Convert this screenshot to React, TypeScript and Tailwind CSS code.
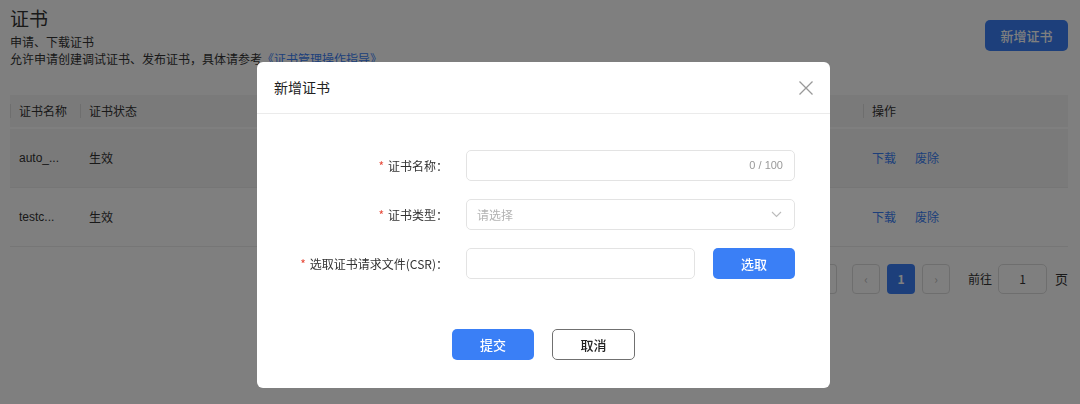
import { useState } from 'react';

const font = { fontFamily: '"Noto Sans CJK SC", "Noto Sans", sans-serif' };

const rows = [
  { name: 'auto_...', status: '生效', hover: true },
  { name: 'testc...', status: '生效', hover: false },
];

const CertPage = () => (
  <div className="w-[1080px] h-[404px] bg-white text-[#333] overflow-hidden" style={font}>
    <div className="flex justify-between pl-[10px] pr-[12px] pt-[4px]">
      <div>
        <div className="text-[19px] leading-[28px]">证书</div>
        <div className="text-[12px] leading-[17px] mt-[1px]">申请、下载证书</div>
        <div className="text-[12px] leading-[17px]">
          允许申请创建调试证书、发布证书，具体请参考<span className="text-[#3a7ff6]">《证书管理操作指导》</span>
        </div>
      </div>
      <button className="mt-[16px] h-[31px] w-[83px] rounded-[5px] bg-[#3a7ff6] text-white text-[13px] font-medium">
        新增证书
      </button>
    </div>

    <div className="ml-[10px] mr-[12px] mt-[28px]">
      <div className="flex h-[32px] items-center bg-[#f5f5f5] text-[12px]">
        <div className="w-[70px] flex items-center">
          <span className="w-px h-[14px] bg-[#ddd] mr-[8px]" />
          证书名称
        </div>
        <div className="flex-1 flex items-center">
          <span className="w-px h-[14px] bg-[#ddd] mr-[8px]" />
          证书状态
        </div>
        <div className="w-[205px] flex items-center">
          <span className="w-px h-[14px] bg-[#ddd] mr-[8px]" />
          操作
        </div>
      </div>
      <div className="mt-[2px]">
        {rows.map((r) => (
          <div
            key={r.name}
            className={`flex h-[59px] items-center text-[12px] border-b border-[#ececec] ${r.hover ? 'bg-[#f5f5f5]' : ''}`}
          >
            <div className="w-[70px] pl-[9px]" style={{ fontFamily: '"Liberation Sans", "Noto Sans CJK SC", sans-serif' }}>
              {r.name}
            </div>
            <div className="flex-1 pl-[9px]">{r.status}</div>
            <div className="w-[205px] pl-[9px] flex gap-[19px] text-[#3a7ff6]">
              <span>下载</span>
              <span>废除</span>
            </div>
          </div>
        ))}
      </div>
      <div className="flex items-center justify-end mt-[17px] text-[12px]">
        <div className="w-[20px] h-[30px] border border-[#ddd] border-l-0 rounded-r-[4px] mr-[15px]" />
        <div className="w-[28px] h-[30px] border border-[#ddd] rounded-[4px] flex items-center justify-center text-[#bbb]">‹</div>
        <div className="w-[28px] h-[30px] ml-[7px] rounded-[4px] bg-[#3a7ff6] text-white flex items-center justify-center font-semibold">1</div>
        <div className="w-[28px] h-[30px] ml-[7px] border border-[#ddd] rounded-[4px] flex items-center justify-center text-[#bbb]">›</div>
        <span className="ml-[18px]">前往</span>
        <div className="w-[49px] h-[30px] ml-[6px] border border-[#ddd] rounded-[5px] flex items-center justify-center">1</div>
        <span className="ml-[8px] text-[13px]">页</span>
      </div>
    </div>
  </div>
);

const Label = ({ children }: { children: string }) => (
  <div className="w-[209px] pr-[18px] text-right text-[12px] text-[#333] shrink-0">
    <span className="text-[#e74c3c] mr-[4px]">*</span>
    {children}
  </div>
);

const Dialog = () => {
  const [name, setName] = useState('');
  return (
    <div className="fixed inset-0 bg-black/50" style={font}>
      <div className="absolute left-[257px] top-[62px] w-[573px] h-[326px] bg-white rounded-[6px] flex flex-col">
        <div className="h-[52px] flex items-center justify-between pl-[17px] pr-[16px] border-b border-[#ebebeb]">
          <span className="text-[14px] text-[#222]">新增证书</span>
          <svg width="16" height="16" viewBox="0 0 16 16" fill="none" stroke="#999" strokeWidth="1.3">
            <path d="M1.5 1.5 14.5 14.5M14.5 1.5 1.5 14.5" />
          </svg>
        </div>
        <div className="pt-[36px] pr-[35px] flex flex-col gap-[18px]">
          <div className="flex items-center">
            <Label>证书名称：</Label>
            <div className="flex-1 h-[31px] border border-[#e3e3e3] rounded-[5px] flex items-center px-[11px]">
              <input
                className="flex-1 outline-none text-[12px] bg-transparent"
                value={name}
                onChange={(e) => setName(e.target.value)}
              />
              <span className="text-[11px] text-[#999]" style={{ fontFamily: '"Liberation Sans", sans-serif' }}>
                {name.length} / 100
              </span>
            </div>
          </div>
          <div className="flex items-center">
            <Label>证书类型：</Label>
            <div className="flex-1 h-[31px] border border-[#e3e3e3] rounded-[5px] flex items-center justify-between pl-[10px] pr-[12px]">
              <span className="text-[12px] text-[#b3b3b3]">请选择</span>
              <svg width="11" height="7" viewBox="0 0 11 7" fill="none" stroke="#bbb" strokeWidth="1.1">
                <path d="M1 1 5.5 5.5 10 1" />
              </svg>
            </div>
          </div>
          <div className="flex items-center">
            <Label>选取证书请求文件(CSR)：</Label>
            <div className="w-[229px] h-[31px] border border-[#e3e3e3] rounded-[5px]" />
            <button className="ml-[18px] flex-1 h-[31px] rounded-[5px] bg-[#3a7ff6] text-white text-[13px] font-medium">
              选取
            </button>
          </div>
        </div>
        <div className="mt-auto mb-[28px] flex justify-center gap-[18px]">
          <button className="w-[82px] h-[31px] rounded-[5px] bg-[#3a7ff6] text-white text-[13px] font-medium">提交</button>
          <button className="w-[83px] h-[31px] rounded-[5px] border border-[#707070] text-[#222] text-[13px] font-medium">
            取消
          </button>
        </div>
      </div>
    </div>
  );
};

export default function App() {
  return (
    <div className="relative w-[1080px] h-[404px]">
      <CertPage />
      <Dialog />
    </div>
  );
}
